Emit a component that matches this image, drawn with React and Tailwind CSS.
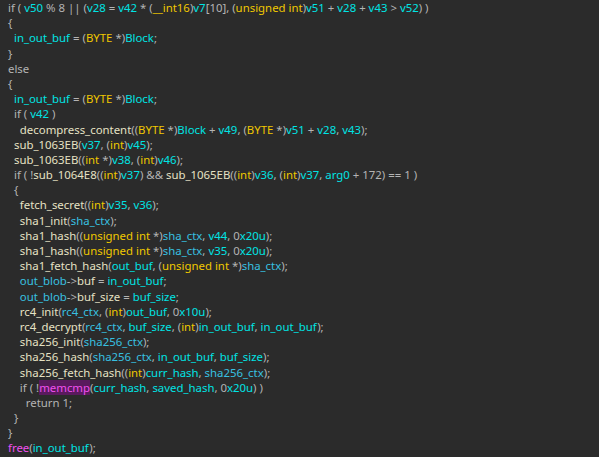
import React from "react";

const lines = [
"if ( v50 % 8 || (v28 = v42 * (__int16)v7[10], (unsigned int)v51 + v28 + v43 > v52) )",
"{",
"  in_out_buf = (BYTE *)Block;",
"}",
"else",
"{",
"  in_out_buf = (BYTE *)Block;",
"  if ( v42 )",
"    decompress_content((BYTE *)Block + v49, (BYTE *)v51 + v28, v43);",
"  sub_1063EB(v37, (int)v45);",
"  sub_1063EB((int *)v38, (int)v46);",
"  if ( !sub_1064E8((int)v37) && sub_1065EB((int)v36, (int)v37, arg0 + 172) == 1 )",
"  {",
"    fetch_secret((int)v35, v36);",
"    sha1_init(sha_ctx);",
"    sha1_hash((unsigned int *)sha_ctx, v44, 0x20u);",
"    sha1_hash((unsigned int *)sha_ctx, v35, 0x20u);",
"    sha1_fetch_hash(out_buf, (unsigned int *)sha_ctx);",
"    out_blob->buf = in_out_buf;",
"    out_blob->buf_size = buf_size;",
"    rc4_init(rc4_ctx, (int)out_buf, 0x10u);",
"    rc4_decrypt(rc4_ctx, buf_size, (int)in_out_buf, in_out_buf);",
"    sha256_init(sha256_ctx);",
"    sha256_hash(sha256_ctx, in_out_buf, buf_size);",
"    sha256_fetch_hash((int)curr_hash, sha256_ctx);",
"    if ( !memcmp(curr_hash, saved_hash, 0x20u) )",
"      return 1;",
"  }",
"}",
"free(in_out_buf);",
];

const types = new Set(["BYTE", "int", "unsigned", "__int16"]);
const kw = new Set(["if", "else", "return"]);
const globals = new Set(["out_blob", "sha_ctx", "rc4_ctx", "sha256_ctx"]);

function renderLine(line, li) {
  const re = /([A-Za-z_][A-Za-z0-9_]*)|(\s+)|([^A-Za-z_\s]+?)/g;
  const out = [];
  let m;
  const toks = [];
  while ((m = re.exec(line))) toks.push(m[0]);
  toks.forEach((t, idx) => {
    const key = li + "-" + idx;
    const next = toks[idx + 1];
    const prev = toks[idx - 1];
    let cls = "text-[#b4b4b4]";
    if (/^[A-Za-z_]/.test(t)) {
      if (types.has(t)) cls = "text-[#f0c800]";
      else if (kw.has(t)) cls = "text-[#b4b4b4]";
      else if (t === "free") cls = "text-[#f050f0]";
      else if (t === "memcmp") {
        out.push(<span key={key + "c"} className="inline-block w-[2px] h-[14px] -mr-[2px] bg-white align-[-3px]" />);
        out.push(<span key={key} className="text-[#f050f0] bg-[#5a1a5e]">{t}</span>);
        return;
      }
      else if (next === "(") cls = "text-[#e6e2c4]";
      else if (prev === ">") cls = "text-[#e6e2c4]";
      else if (globals.has(t)) cls = "text-[#38c0e0]";
      else cls = "text-[#00e4e4]";
    }
    out.push(<span key={key} className={cls}>{t}</span>);
  });
  return out;
}

export default function App() {
  return (
    <div className="w-[599px] h-[457px] bg-[#2b2b2b] overflow-hidden pl-[8px] font-['Liberation_Mono'] text-[11.4px] leading-[15.2px] whitespace-pre">
      {lines.map((l, i) => (
        <div key={i} className="h-[15.2px]">{renderLine(l, i)}</div>
      ))}
    </div>
  );
}
